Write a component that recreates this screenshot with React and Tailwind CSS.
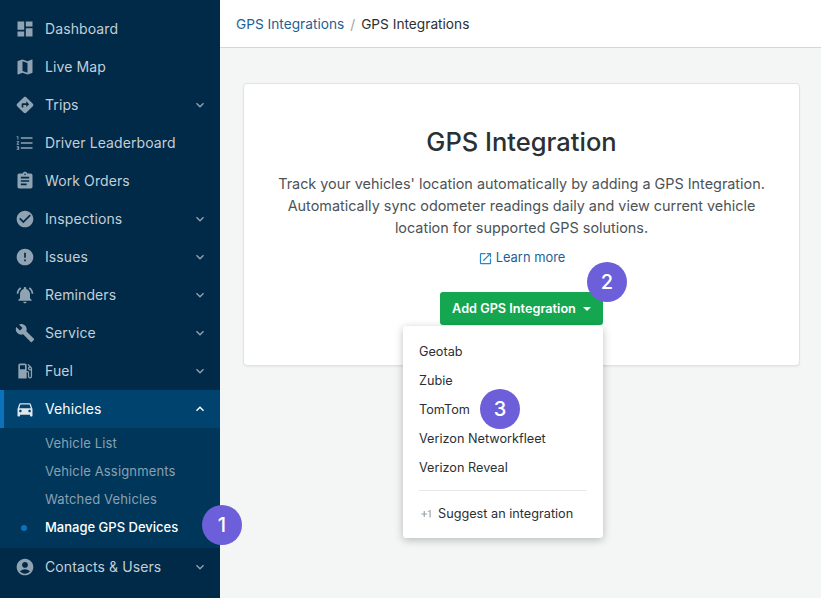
import { MdDashboard, MdMap, MdDirections, MdFormatListNumbered, MdAssignment, MdCheckCircle, MdError, MdNotificationsActive, MdBuild, MdLocalGasStation, MdDirectionsCar, MdAccountCircle, MdOpenInNew, MdExposurePlus1, MdKeyboardArrowDown, MdKeyboardArrowUp } from "react-icons/md";

const NAV_TOP = [
  { label: "Dashboard", icon: MdDashboard },
  { label: "Live Map", icon: MdMap },
  { label: "Trips", icon: MdDirections, more: true },
  { label: "Driver Leaderboard", icon: MdFormatListNumbered },
  { label: "Work Orders", icon: MdAssignment },
  { label: "Inspections", icon: MdCheckCircle, more: true },
  { label: "Issues", icon: MdError, more: true },
  { label: "Reminders", icon: MdNotificationsActive, more: true },
  { label: "Service", icon: MdBuild, more: true },
  { label: "Fuel", icon: MdLocalGasStation, more: true },
];

const SUB = ["Vehicle List", "Vehicle Assignments", "Watched Vehicles"];
const PROVIDERS = ["Geotab", "Zubie", "TomTom", "Verizon Networkfleet", "Verizon Reveal"];

function NavRow({ item }) {
  const Icon = item.icon;
  return (
    <div className="flex h-[38px] items-center pl-[15px] pr-[12px] text-[14px] tracking-[0.1px] text-[#c3cfd9]">
      <Icon className="h-[20px] w-[20px] shrink-0 text-[#8fa3b3]" />
      <span className="ml-[10px] flex-1 pb-[2px]">{item.label}</span>
      {item.more && <MdKeyboardArrowDown className="h-[16px] w-[16px] text-[#8fa3b3]" />}
    </div>
  );
}

function Badge({ n, className }) {
  return (
    <div className={"absolute flex h-[40px] w-[40px] items-center justify-center rounded-full bg-[#6c5fd9] text-[20px] font-medium text-white " + className}>
      {n}
    </div>
  );
}

export default function App() {
  return (
    <div className="relative flex h-[598px] w-[821px] overflow-hidden bg-[#f4f5f5] font-['Inter',sans-serif]">
      <div className="h-full w-[220px] shrink-0 bg-[#002a47] pt-[10px]">
        {NAV_TOP.map((item) => <NavRow key={item.label} item={item} />)}
        <div className="flex h-[38px] items-center border-l-4 border-[#0b72bb] bg-[#00436f] pl-[11px] pr-[12px] text-[14px] tracking-[0.1px] text-white">
          <MdDirectionsCar className="h-[20px] w-[20px] shrink-0 text-[#dfe6ec]" />
          <span className="ml-[10px] flex-1 pb-[2px]">Vehicles</span>
          <MdKeyboardArrowUp className="h-[16px] w-[16px] text-white" />
        </div>
        <div className="h-[120px] bg-[#00365a] pt-[2px] text-[13px] tracking-[0.15px] text-[#8aa1b2]">
          {SUB.map((s) => <div key={s} className="flex h-[28px] items-center pl-[45px]">{s}</div>)}
          <div className="relative flex h-[28px] items-center pl-[45px] font-medium tracking-normal text-white">
            <span className="absolute left-[21px] top-[11px] h-[6px] w-[6px] rounded-full bg-[#0b72bb]" />
            Manage GPS Devices
          </div>
        </div>
        <NavRow item={{ label: "Contacts & Users", icon: MdAccountCircle, more: true }} />
      </div>

      <div className="flex min-w-0 flex-1 flex-col">
        <div className="flex h-[48px] shrink-0 items-center border-b border-[#d3d7d9] bg-white pl-[16px] pt-[2px] text-[13.7px] text-[#2b3033]">
          <span className="text-[#1f5f96]">GPS Integrations</span>
          <span className="mx-[6px] text-[#9aa3a8]">/</span>
          <span>GPS Integrations</span>
        </div>
        <div className="pl-[23px] pr-[21px] pt-[35px]">
          <div className="flex h-[283px] flex-col items-center rounded-[4px] border border-[#e0e3e4] bg-white pt-[40px] shadow-[0_1px_2px_rgba(0,0,0,0.06)]">
            <h1 className="text-[25.5px] font-medium leading-[36px] text-[#2b3033]">GPS Integration</h1>
            <p className="mt-[13px] w-[510px] text-center text-[14.4px] leading-[22px] text-[#4c5357]">
              Track your vehicles' location automatically by adding a GPS Integration. Automatically sync odometer readings daily and view current vehicle location for supported GPS solutions.
            </p>
            <div className="mt-[9px] flex h-[20px] items-center text-[12.9px] text-[#1f5f96]">
              <MdOpenInNew className="mr-[3px] h-[15px] w-[15px] text-[#2a87c8]" />
              Learn more
            </div>
            <div className="mt-[24px] flex h-[33px] w-[163px] items-center justify-center rounded-[3px] bg-[#15a650] text-[12.7px] font-semibold text-white">
              Add GPS Integration
              <span className="ml-[7px] h-0 w-0 border-x-[4px] border-t-[4px] border-x-transparent border-t-white" />
            </div>
          </div>
        </div>
      </div>

      <div className="absolute left-[403px] top-[326px] w-[200px] rounded-[3px] bg-white px-[16px] pt-[11px] text-[12.7px] text-[#2b3033] shadow-[0_2px_8px_rgba(0,0,0,0.25)]">
        {PROVIDERS.map((p) => <div key={p} className="flex h-[29px] items-center">{p}</div>)}
        <div className="mt-[8px] border-t border-[#e6e8e9]" />
        <div className="flex h-[47px] items-center pb-[1px]">
          <MdExposurePlus1 className="mr-[5px] h-[14px] w-[14px] text-[#9aa3a8]" />
          Suggest an integration
        </div>
      </div>

      <Badge n="1" className="left-[202px] top-[505px]" />
      <Badge n="2" className="left-[587px] top-[262px]" />
      <Badge n="3" className="left-[480px] top-[389px]" />
    </div>
  );
}
